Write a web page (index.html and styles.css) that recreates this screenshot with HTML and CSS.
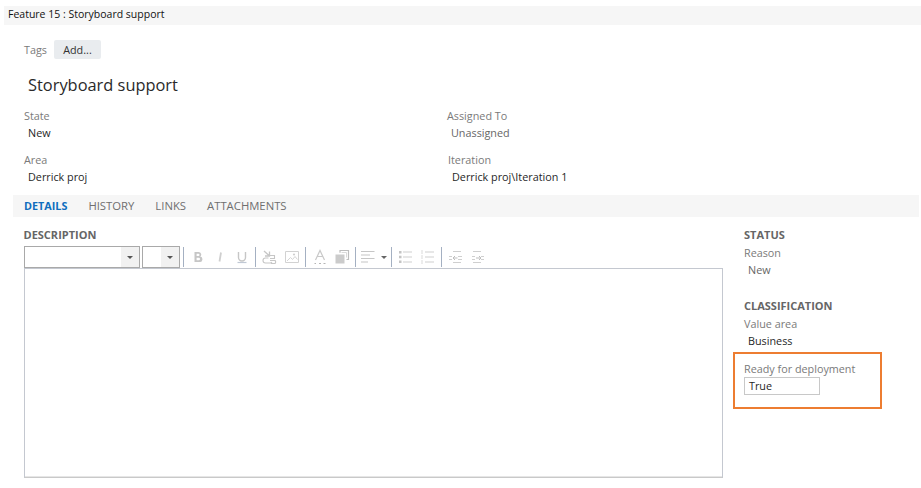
FILE: index.html
```html
<!DOCTYPE html>
<html lang="en">
<head>
<meta charset="utf-8">
<title>Feature 15 : Storyboard support</title>
<link rel="stylesheet" href="styles.css">
</head>
<body>
<div class="titlebar">Feature 15 : Storyboard support</div>
<div class="tags"><span class="label">Tags</span><button class="add">Add...</button></div>
<h1 class="title">Storyboard support</h1>
<div class="fields">
  <div class="field"><div class="label">State</div><div class="value">New</div></div>
  <div class="field f-assigned"><div class="label">Assigned To</div><div class="value muted">Unassigned</div></div>
  <div class="field"><div class="label">Area</div><div class="value">Derrick proj</div></div>
  <div class="field f-iter"><div class="label">Iteration</div><div class="value">Derrick proj\Iteration 1</div></div>
</div>
<nav class="tabs">
  <span class="tab active">DETAILS</span><span class="tab">HISTORY</span><span class="tab">LINKS</span><span class="tab">ATTACHMENTS</span>
</nav>
<div class="body">
  <section class="main">
    <h2 class="heading">DESCRIPTION</h2>
    <div class="toolbar">
      <div class="combo c-font"><span class="arrow-box"><i class="caret"></i></span></div>
      <div class="combo c-size"><span class="arrow-box"><i class="caret"></i></span></div>
      <i class="sep"></i>
      <svg class="ic" width="16" height="16" viewBox="0 0 16 16"><path d="M4.500 3h4.200a2.500 2.500 0 0 1 1.500 4.500a2.800 2.800 0 0 1-1.300 5.500H4.500zM6.600 4.800v2.200h1.800a1.100 1.100 0 0 0 0-2.200zM6.600 8.700v2.600h2.100a1.300 1.300 0 0 0 0-2.600z" fill="#c6c6c6" fill-rule="evenodd"/></svg>
      <svg class="ic" width="16" height="16" viewBox="0 0 16 16"><path d="M9 3.500 7.500 12.500" stroke="#cfcfcf" stroke-width="1.800" fill="none"/></svg>
      <svg class="ic" width="16" height="16" viewBox="0 0 16 16"><path d="M4.500 3v5.500a3.500 3.500 0 0 0 7 0V3" stroke="#c6c6c6" stroke-width="1.400" fill="none"/><path d="M3.500 13.500h9" stroke="#c0c8d4" stroke-width="1.200"/></svg>
      <i class="sep"></i>
      <svg class="ic" width="16" height="16" viewBox="0 0 16 16"><path d="M2 2l5 4.500M7.500 2.500v4.500H3" stroke="#c6c6c6" stroke-width="1.300" fill="none"/><path d="M8 6.500h4.500v3H8M6.500 9H3.500a2.500 2.500 0 0 0 0 5H8a2.500 2.500 0 0 0 2-1M8 11.500h5a2 2 0 0 1 0 3H9" stroke="#c6c6c6" stroke-width="1.100" fill="none"/></svg>
      <svg class="ic" width="16" height="16" viewBox="0 0 16 16"><path d="M1.500 2.500h13v11h-13z" stroke="#d2d2d2" fill="none"/><path d="M3 12l3.500-3.500 2 2 2.500-3 2.500 3" stroke="#d5d5d5" fill="none"/><circle cx="10" cy="5.500" r="1.100" fill="#cfcfcf"/></svg>
      <i class="sep"></i>
      <svg class="ic" width="16" height="16" viewBox="0 0 16 16"><path d="M3.500 11 8 1.500 12.500 11M5.500 7.500h5" stroke="#c9c9c9" stroke-width="1.200" fill="none"/><path d="M2.500 14.500h1.500M7 14.500h2M11.500 14.500h2" stroke="#b5b5b5"/></svg>
      <svg class="ic" width="16" height="16" viewBox="0 0 16 16"><path d="M1.500 5.500h9v9h-9z" fill="#cbcbcb"/><path d="M6 3.800V1.500h8.500v9H12.500" stroke="#bdbdbd" stroke-width="1.200" fill="none"/><path d="M7.500 3.500h5v5" stroke="#dadada" fill="none"/></svg>
      <i class="sep"></i>
      <svg class="ic ic-align" width="14" height="16" viewBox="0 0 14 16"><path d="M0 2.500h13.500M0 6h9M0 9.500h13.500M0 13h7" stroke="#c6c6c6" stroke-width="1.200"/></svg>
      <i class="caret small"></i>
      <i class="sep"></i>
      <svg class="ic" width="16" height="16" viewBox="0 0 16 16"><path d="M5 3h9M5 8h9M5 13h9" stroke="#cfcfcf"/><path d="M1 2h2.500v2.500H1zM1 6.800h2.500v2.500H1zM1 11.600h2.500v2.500H1z" fill="#c4c4c4"/></svg>
      <svg class="ic" width="16" height="16" viewBox="0 0 16 16"><path d="M5 3h9M5 8h9M5 13h9" stroke="#cfcfcf"/><path d="M1 2h2M1 4h2M1 7h2M1 9h2M1 12h2M1 14h2" stroke="#dadada"/></svg>
      <i class="sep"></i>
      <svg class="ic" width="16" height="16" viewBox="0 0 16 16"><path d="M5 2.500h8M1 7.500h3M1 10.500h3M10 7.500h4M10 10.500h4M5 13.500h8" stroke="#cfcfcf"/><path d="M9.500 9H5M5 9l2-2M5 9l2 2" stroke="#bdbdbd" fill="none"/></svg>
      <svg class="ic" width="16" height="16" viewBox="0 0 16 16"><path d="M3 2.500h8M2 7.500h3M2 10.500h3M11 7.500h3M11 10.500h3M3 13.500h8" stroke="#cfcfcf"/><path d="M6 9h5M11 9 9 7M11 9l-2 2" stroke="#bdbdbd" fill="none"/></svg>
    </div>
    <div class="editor"></div>
  </section>
  <aside class="side">
    <h2 class="heading">STATUS</h2>
    <div class="label s-label">Reason</div>
    <div class="value muted">New</div>
    <h2 class="heading h-class">CLASSIFICATION</h2>
    <div class="label s-label">Value area</div>
    <div class="value">Business</div>
    <div class="callout">
      <div class="label s-label">Ready for deployment</div>
      <div class="input">True</div>
    </div>
  </aside>
</div>
</body>
</html>
```
FILE: styles.css
```css
* { box-sizing: border-box; }
html, body { margin: 0; background: #fff; }
body {
  width: 921px;
  height: 488px;
  overflow: hidden;
  padding-top: 6px;
  font-family: "Open Sans", "Noto Sans", sans-serif;
  font-size: 10.8px;
  line-height: 16px;
  color: #1f1f1f;
}
.titlebar {
  margin-left: 4px;
  height: 19px;
  padding-left: 4px;
  background: #f6f6f6;
  font-size: 10.500px;
  line-height: 17px;
  color: #111;
}
.tags {
  display: flex;
  align-items: center;
  gap: 7px;
  margin: 15px 0 0 24px;
  height: 19px;
}
.label { color: #7a7a7a; }
.add {
  width: 47px;
  height: 19px;
  padding: 0;
  border: 0;
  border-radius: 2px;
  background: #e9ecef;
  font: inherit;
  color: #333;
}
.title {
  margin: 14px 0 0 28px;
  font-size: 16.400px;
  line-height: 23px;
  font-weight: 400;
  color: #2a2a2a;
}
.fields {
  display: grid;
  grid-template-columns: 423px 1fr;
  row-gap: 11px;
  margin: 12px 0 0 24px;
}
.value { padding-left: 4px; margin-top: 1px; }
.value.muted { color: #666; }
.f-iter { padding-left: 1px; }
.tabs {
  display: flex;
  align-items: center;
  gap: 21px;
  height: 22px;
  margin: 10px 2px 0 13px;
  padding-left: 11px;
  background: #f6f6f6;
  color: #6f6f6f;
  font-size: 11.300px;
}
.tab.active { color: #106ebe; font-weight: 700; font-size: 10.800px; }
.body {
  display: flex;
  margin: 10px 0 0 23.500px;
}
.main { width: 699px; }
.heading {
  margin: 0;
  font-size: 11px;
  line-height: 16px;
  font-weight: 700;
  color: #666;
}
.toolbar {
  display: flex;
  align-items: center;
  height: 22px;
  margin-top: 3px;
}
.combo {
  display: flex;
  justify-content: flex-end;
  height: 22px;
  border: 1px solid #a9a9a9;
  background: #fff;
}
.c-font { width: 116px; }
.c-size { width: 38px; margin: 0 1px 0 2px; }
.arrow-box {
  display: flex;
  align-items: center;
  justify-content: center;
  width: 18px;
  background: #f1f1f1;
}
.caret {
  display: block;
  width: 0;
  height: 0;
  border: 3px solid transparent;
  border-top: 3px solid #555;
  border-bottom: 0;
  margin-top: 1px;
}
.caret.small { margin: 1px 2px 0 6px; border-top-color: #666; }
.sep {
  display: block;
  flex: none;
  width: 1px;
  height: 20px;
  margin: 0 3px 0 2px;
  background: #a4b0c2;
}
.ic { margin: 0 3px; flex: none; }
.ic-align { margin: 0 0 0 2px; }
.editor {
  width: 699px;
  height: 210px;
  border: 1px solid #c4c8d0;
  border-bottom-color: #c9c9c9;
  box-shadow: inset 0 -1px 0 #e6e6e6;
}
.side { margin-left: 21.500px; width: 175px; }
.s-label { margin-top: 2px; }
.side > .value { margin-top: 1px; }
.h-class { margin-top: 20px; }
.callout {
  width: 149px;
  height: 57px;
  margin: 3px 0 0 -11px;
  padding: 7px 0 0 9px;
  border: 2px solid #ed7d31;
}
.callout .s-label { margin-top: 0; }
.input {
  width: 76px;
  height: 18px;
  padding-left: 4px;
  border: 1px solid #c8c8c8;
  line-height: 16px;
  color: #1f1f1f;
}
```
